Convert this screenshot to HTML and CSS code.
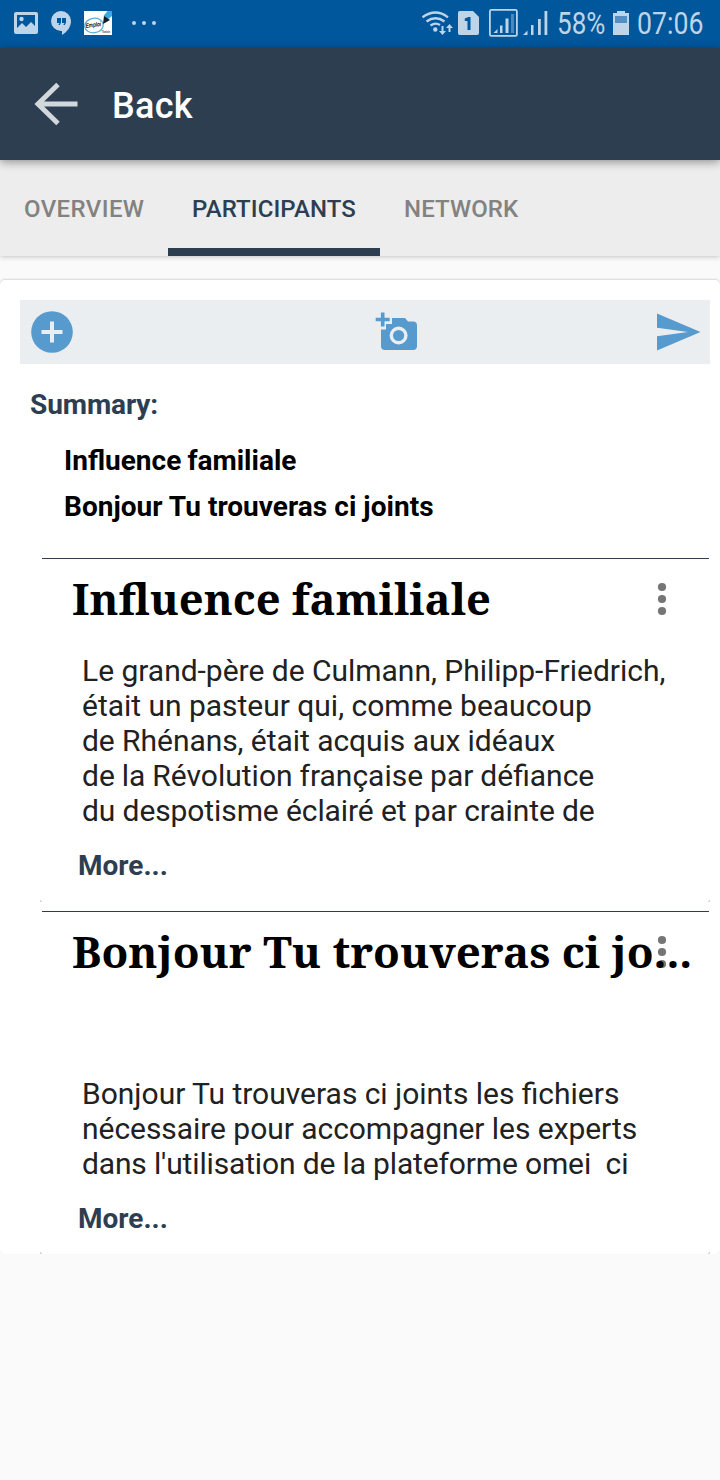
FILE: index.html
```html
<!DOCTYPE html>
<html lang="fr">
<head>
<meta charset="utf-8">
<title>Participants</title>
<link rel="stylesheet" href="styles.css">
</head>
<body>
<div class="status">
  <svg class="status-left" width="170" height="48" viewBox="0 0 170 48" fill="#bed4e8">
    <path fill-rule="evenodd" d="M16 12h20q2 0 2 2v18q0 2-2 2H16q-2 0-2-2V14q0-2 2-2zM17 15v13l5-5 4 4 5-5 4 4V15z"/>
    <path d="M17 31v-2l5-5 4 4 5-5 4 4v4z"/><circle cx="21.500" cy="19" r="2.200"/>
    <path fill-rule="evenodd" d="M61 11a10 10 0 0 1 10 10c0 6-4 11-9 14v-4h-1a10 10 0 0 1 0-20zM57 18v5h2.500l-1.200 2h1.500l1.200-2.500V18zM62 18v5h2.500l-1.200 2h1.500l1.200-2.500V18z"/>
    <path d="M84 11h28v24H84z" fill="#fff"/>
    <ellipse cx="94" cy="25.500" rx="9.300" ry="7.300" fill="none" stroke="#51b0dc" stroke-width="1.300" transform="rotate(-8 94 25.500)"/>
    <path d="M103.500 16l4-5h4.500v5l-5 4z" fill="#38aadb"/><path d="M103 24l1-8 6 4z" fill="#151c25"/>
    <text x="86" y="28" class="logo-name" textLength="15.500" lengthAdjust="spacingAndGlyphs" transform="rotate(-7 86 28)">Emploi</text><text x="102" y="33" class="logo-place" textLength="8" lengthAdjust="spacingAndGlyphs">Tunisie</text>
    <circle cx="134" cy="23" r="2"/><circle cx="144" cy="23" r="2"/><circle cx="154" cy="23" r="2"/>
  </svg>
  <div class="status-right">
    <svg width="130" height="48" viewBox="420 0 130 48" fill="#bed4e8">
      <g fill="none" stroke="#bed4e8" stroke-width="2.300"><path d="M422.500 17.300q13-9.500 25.500 0M426.500 21.500q9-6.500 18 0M430.500 25.500q5-3.500 9.500-.5"/></g>
      <circle cx="435.300" cy="29.500" r="2.200"/>
      <path d="M441.500 26h2v5h2.500l-3.500 4-3.500-4h2.500zM448.500 32h2v-4h2.500l-3.500-4-3.500 4h2.500z"/>
      <path d="M459.500 11H473l6 6v16q0 2-2 2h-17.500q-1.500 0-1.500-2V13q0-2 1.500-2z"/><path d="M467.500 30V21h-2.700v-2.500l3.700-1.500h2v13z" fill="#00579c"/>
      <rect x="489.900" y="9.900" width="27" height="26" rx="1.500" fill="none" stroke="#bed4e8" stroke-width="1.800"/>
      <path d="M493.500 33l4-4v4zM500 25.500h2.500V33H500zM505.500 18.500h3V33h-3z"/><path d="M511 14h3v19h-3z" opacity=".4"/>
      <path d="M523 35l4.500-4.500V35zM531 25h2.500v10H531zM538 19h2.800v16H538zM544.500 11h2.800v24h-2.800z"/>
    </svg>
    <span class="percent">58%</span>
    <svg class="battery" width="18" height="48" viewBox="612 0 18 48"><path d="M617 11h8v2h4v22h-16V13h4z" fill="#bed4e8"/><path d="M615 16h12v7h-12z" fill="#558fc2"/></svg>
    <span class="clock">07:06</span>
  </div>
</div>
<header class="appbar">
  <svg width="112" height="112" viewBox="0 48 112 112"><path d="M77.500 104H38M58 84.500L38 104l20 19.500" fill="none" stroke="#d2d7dc" stroke-width="5"/></svg>
  <span class="back">Back</span>
</header>
<nav class="tabs">
  <span class="tab">OVERVIEW</span><span class="tab active">PARTICIPANTS</span><span class="tab">NETWORK</span>
</nav>
<main class="card">
  <div class="toolbar">
    <svg width="64" height="64" viewBox="20 300 64 64"><circle cx="52" cy="332" r="20.800" fill="#579ace"/><path d="M41.500 332h21M52 321.500v21" stroke="#eaeef1" stroke-width="4"/></svg>
    <svg class="camera" width="64" height="64" viewBox="365 300 64 64"><path d="M392 318h13l3 3.500h5q4 0 4 4v20.500q0 4-4 4h-28q-4 0-4-4v-16.500h5v-5.500h6z" fill="#579ace"/><path d="M375.700 319.500h14M382.700 312.500v14" stroke="#579ace" stroke-width="3.600"/><circle cx="398.600" cy="335.500" r="7.300" fill="none" stroke="#eaeef1" stroke-width="3.400"/></svg>
    <svg width="64" height="64" viewBox="646 300 64 64"><path d="M657 313.500L700.500 332 657 350.500V336.300L688 332l-31-4.300z" fill="#579ace"/></svg>
  </div>
  <h1 class="summary">Summary:</h1>
  <ul class="toc"><li class="toc-one">Influence familiale</li><li class="toc-two">Bonjour Tu trouveras ci joints</li></ul>
  <article class="entry first">
    <h2 class="title"><span class="title-one">Influence familiale</span></h2>
    <svg class="menu" width="10" height="34" viewBox="0 0 10 34" fill="#757575"><circle cx="5" cy="5" r="4.100"/><circle cx="5" cy="17" r="4.100"/><circle cx="5" cy="29" r="4.100"/></svg>
    <p class="copy">Le grand-père de Culmann, Philipp-Friedrich,<br>était un pasteur qui, comme beaucoup<br><span class="snug">de Rhénans, était acquis aux idéaux</span><br><span class="close-words">de la Révolution française par défiance</span><br><span class="tight">du despotisme éclairé et par crainte de</span></p>
    <span class="more">More...</span>
  </article>
  <article class="entry second">
    <svg class="menu" width="10" height="34" viewBox="0 0 10 34" fill="#757575"><circle cx="5" cy="5" r="4.100"/><circle cx="5" cy="17" r="4.100"/><circle cx="5" cy="29" r="4.100"/></svg>
    <h2 class="title"><span class="title-two">Bonjour Tu trouveras ci jo...</span></h2>
    <p class="copy"><span class="ligature-line">Bonjour Tu trouveras ci joints les fichiers</span><br><span class="snug">nécessaire pour accompagner les experts</span><br><span class="tightest">dans l'utilisation de la plateforme omei&nbsp; ci</span></p>
    <span class="more">More...</span>
  </article>
</main>
</body>
</html>
```
FILE: styles.css
```css
* { box-sizing: border-box; }
body { margin: 0; min-height: 1480px; background: #fafafa; font-family: Roboto, sans-serif; overflow: hidden; }
svg { display: block; flex: none; }
.status { height: 48px; background: #00579c; display: flex; justify-content: space-between; color: #bed4e8; }
.status-right { display: flex; width: 300px; font-size: 31px; line-height: 48px; white-space: nowrap; }
.logo-name { font: italic bold 6.500px "Liberation Sans", sans-serif; fill: #111; }
.logo-place { font: bold 3px "Liberation Sans", sans-serif; fill: #333; }
.percent { width: 62px; padding-left: 7px; transform: scaleX(.84); transform-origin: 7px 50%; }
.clock { padding-left: 7px; transform: scaleX(.86); transform-origin: 7px 50%; }
.appbar { position: relative; z-index: 2; height: 112px; background: #2d3e50; color: #fff; display: flex; align-items: center; box-shadow: 0 2px 9px rgba(0,0,0,.4); }
.back { font-size: 36px; font-weight: 500; line-height: 42px; padding-top: 4px; letter-spacing: .3px; }
.tabs { position: relative; z-index: 1; height: 96px; display: flex; background: #ededed; box-shadow: 0 1px 5px rgba(0,0,0,.22); }
.tab { flex: none; width: 168px; padding: 35px 0 0 24px; font-size: 24px; font-weight: 500; line-height: 28px; color: #828282; letter-spacing: .4px; }
.active { width: 212px; letter-spacing: .1px; color: #2d3e50; border-bottom: 8px solid #2d3e50; }
.tab:last-child { letter-spacing: .1px; }
.card { margin-top: 24px; height: 974px; padding: 20px 10px 0 20px; background: #fff; border-radius: 5px; box-shadow: 0 -1px 2px rgba(0,0,0,.14); }
.toolbar { height: 64px; background: #eaeef1; display: flex; }
.camera { margin: 0 217px 0 281px; }
.summary { margin: 24px 0 0 10px; font-size: 28px; line-height: 33px; font-weight: 700; color: #2d3e50; letter-spacing: -.1px; }
.toc { list-style: none; margin: 17px 0 0 44px; padding: 0; font-weight: 700; font-size: 28px; line-height: 46px; color: #000; }
.toc-one { word-spacing: -.8px; }
.toc-two { letter-spacing: .03px; }
.entry { position: relative; margin-left: 20px; }
.entry::before { content: ""; display: block; height: 1px; margin: 0 1px 0 2px; background: #2d3e50; }
/* faint shadow left at the card's rounded lower corners */
.entry::after {
  content: ""; position: absolute; left: 0; right: 0; bottom: 9px; height: 2px;
  background: linear-gradient(#d4d4d4, #d4d4d4) left bottom / 2px 1px no-repeat, linear-gradient(#d4d4d4, #d4d4d4) left top / 1px 1px no-repeat, linear-gradient(#d4d4d4, #d4d4d4) right bottom / 2px 1px no-repeat, linear-gradient(#d4d4d4, #d4d4d4) right top / 1px 1px no-repeat;
}
.second::after { bottom: 0; }
.first { margin-top: 28px; height: 353px; }
.second { height: 343px; }
.title { margin: 0; padding: 7px 0 0 32px; height: 94px; font-family: "Noto Serif", "Droid Serif", "DejaVu Serif Condensed", "DejaVu Serif", serif; font-weight: 700; font-size: 44px; line-height: 64px; color: #000; white-space: nowrap; position: relative; }
.second .title { height: 164px; }
.title span { display: inline-block; transform-origin: 0 50%; }
.title-one { transform: scaleX(.989); }
.title-two { transform: scaleX(.996); }
.menu { position: absolute; left: 617px; top: 24px; }
.copy { margin: 0; padding-left: 42px; font-size: 30px; line-height: 35px; color: #212121; white-space: nowrap; letter-spacing: -.02px; }
.snug { letter-spacing: -.05px; }
.close-words { letter-spacing: 0; word-spacing: -.5px; }
.ligature-line { letter-spacing: 0; word-spacing: -.15px; }
.tight { letter-spacing: -.1px; }
.tightest { letter-spacing: -.15px; }
.more { display: block; margin: 21px 0 0 38px; font-size: 28px; font-weight: 700; line-height: 33px; color: #2d3e50; }
```
